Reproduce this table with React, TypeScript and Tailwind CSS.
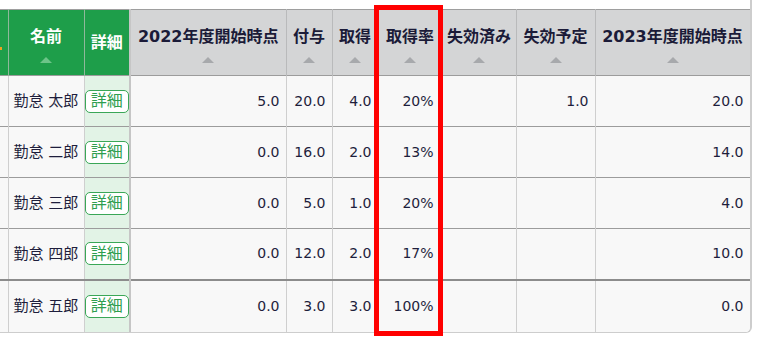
import React from 'react';

type Row = {
  name: string;
  start: string;
  grant: string;
  taken: string;
  rate: string;
  expired: string;
  planned: string;
  next: string;
};

const ROWS: Row[] = [
  { name: '勤怠 太郎', start: '5.0', grant: '20.0', taken: '4.0', rate: '20%', expired: '', planned: '1.0', next: '20.0' },
  { name: '勤怠 二郎', start: '0.0', grant: '16.0', taken: '2.0', rate: '13%', expired: '', planned: '', next: '14.0' },
  { name: '勤怠 三郎', start: '0.0', grant: '5.0', taken: '1.0', rate: '20%', expired: '', planned: '', next: '4.0' },
  { name: '勤怠 四郎', start: '0.0', grant: '12.0', taken: '2.0', rate: '17%', expired: '', planned: '', next: '10.0' },
  { name: '勤怠 五郎', start: '0.0', grant: '3.0', taken: '3.0', rate: '100%', expired: '', planned: '', next: '0.0' },
];

// small sort triangle under each header label
function SortArrow({ light }: { light?: boolean }) {
  return (
    <svg width="12" height="6" viewBox="0 0 12 6" className="mt-[9px]">
      <polygon points="6,0 12,6 0,6" fill={light ? '#6cc488' : '#a7a9ac'} />
    </svg>
  );
}

function GrayHead({ label }: { label: string }) {
  return (
    <th className="bg-[#d4d5d6] border-x border-[#b9babb] p-0 align-top">
      <div className="flex flex-col items-center pt-[16px] text-[16px] font-bold leading-[22px] text-[#1b1b38] whitespace-nowrap">
        <span>{label}</span>
        <SortArrow />
      </div>
    </th>
  );
}

export default function App() {
  const numCell = 'border-x border-[#cfcfcf] text-right pr-[6px] text-[14px] text-[#1e1e3c]';

  return (
    <div className="relative w-[760px] h-[341px] bg-white overflow-hidden" style={{ fontFamily: '"DejaVu Sans", "Noto Sans CJK JP", sans-serif' }}>
      <div className="w-[752px] pt-[9px] border-r-2 border-b border-[#cdcdcd] rounded-br-[6px] overflow-hidden">
        <table className="table-fixed border-collapse w-[750px]">
          <colgroup>
            <col className="w-[8px]" />
            <col className="w-[76px]" />
            <col className="w-[46px]" />
            <col className="w-[156px]" />
            <col className="w-[46px]" />
            <col className="w-[46px]" />
            <col className="w-[64px]" />
            <col className="w-[74px]" />
            <col className="w-[79px]" />
            <col className="w-[155px]" />
          </colgroup>
          <thead>
            <tr className="h-[66px] border-t border-[#9e9e9e]">
              <th className="bg-[#1e9e4a] border-r border-[#8fb89b] p-0 relative">
                <span className="absolute left-0 top-[37px] w-[2px] h-[3px] bg-[#f0a020]" />
              </th>
              <th className="bg-[#1e9e4a] border-r border-[#8fb89b] p-0 align-top">
                <div className="flex flex-col items-center pt-[16px] text-[16px] font-bold leading-[22px] text-white">
                  <span>名前</span>
                  <SortArrow light />
                </div>
              </th>
              <th className="bg-[#1e9e4a] border-r-2 border-[#c6c6c6] p-0 text-[16px] font-bold text-white">
                詳細
              </th>
              <GrayHead label="2022年度開始時点" />
              <GrayHead label="付与" />
              <GrayHead label="取得" />
              <GrayHead label="取得率" />
              <GrayHead label="失効済み" />
              <GrayHead label="失効予定" />
              <GrayHead label="2023年度開始時点" />
            </tr>
          </thead>
          <tbody>
            {ROWS.map((r, i) => (
              <tr
                key={r.name}
                className={`bg-[#f8f8f8] ${i === 4 ? 'h-[52px] border-t-2 border-[#8c8c8c]' : 'h-[51px] border-t border-[#9c9c9c]'}`}
              >
                <td className="border-r border-[#cfcfcf] p-0" />
                <td className="border-r border-[#cfcfcf] pl-[5px] text-[15px] text-[#1e1e3c] whitespace-nowrap">
                  {r.name}
                </td>
                <td className="bg-[#e2f3e6] border-r-2 border-[#c6c6c6] p-0">
                  <div className="flex justify-center">
                    <button className="w-[45px] h-[23px] bg-white border border-[#3aa757] rounded-[5px] text-[16px] leading-none text-[#2f9e4f]">
                      詳細
                    </button>
                  </div>
                </td>
                <td className={numCell}>{r.start}</td>
                <td className={numCell}>{r.grant}</td>
                <td className={numCell}>{r.taken}</td>
                <td className={`${numCell} pr-[8px]`}>{r.rate}</td>
                <td className={numCell}>{r.expired}</td>
                <td className={numCell}>{r.planned}</td>
                <td className={numCell}>{r.next}</td>
              </tr>
            ))}
          </tbody>
        </table>
      </div>

      {/* red highlight around the 取得率 column */}
      <div className="absolute left-[374px] top-[5px] w-[69px] h-[331px] border-[5px] border-[#ff0000]" />
    </div>
  );
}
